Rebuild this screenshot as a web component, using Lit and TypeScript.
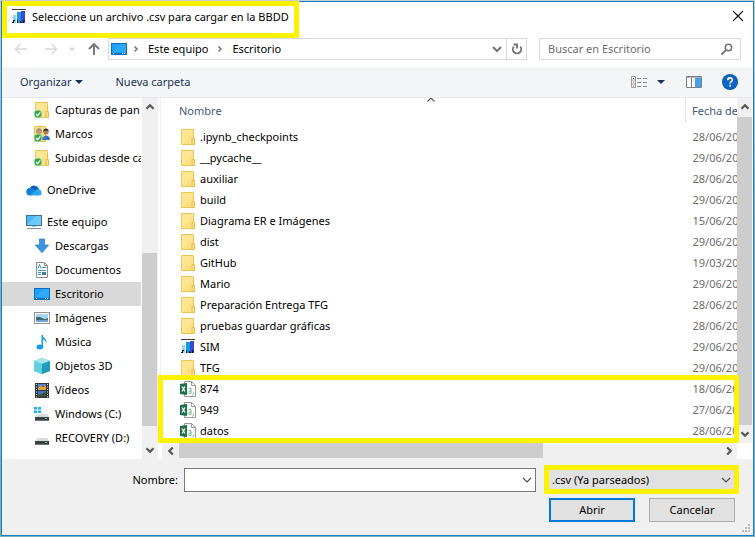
import { LitElement, html, css, svg, TemplateResult } from "lit";
import { customElement, property } from "lit/decorators.js";
import { classMap } from "lit/directives/class-map.js";

const folderShape = svg`
  <path d="M1.500 0.500h12v15h-12z" fill="#ffe596" stroke="#ecc650"/>
  <path d="M2 15L13 3v12z" fill="#ffdd7a" opacity=".6"/>
  <path d="M12 9.500h2.500v6H12z" fill="#ffe28a" stroke="#e6bd42"/>`;

const syncedBadge = svg`
  <circle cx="4" cy="12" r="4" fill="#2fa84a" stroke="#c9ebcf" stroke-width=".6"/>
  <path d="M2 12l1.600 1.700 2.700-3.300" fill="none" stroke="#fff" stroke-width="1.300"/>`;

const driveShape = svg`
  <path d="M3 8h10l2 3H1z" fill="#d9dcdf"/>
  <rect x="1" y="11" width="14" height="4" fill="#3c4146"/>
  <rect x="1" y="14" width="14" height="1" fill="#6d7277"/>
  <rect x="11" y="12" width="2" height="1" fill="#57e06b"/>`;

const shapes: Record<string, TemplateResult> = {
  folder: folderShape,
  syncedFolder: svg`${folderShape}${syncedBadge}`,
  user: svg`
    <path d="M0.500 0.500h11v15h-11z" fill="#ffe08a" stroke="#ecc44f"/>
    <circle cx="5" cy="5.500" r="2.800" fill="#c99a6e"/>
    <path d="M2 6a3 3.300 0 0 1 6-1l-1.500 0-3 .5z" fill="#a3978a"/>
    <path d="M2 11c0-4 6-4 7 0v3h-7z" fill="#8fb1a5"/>
    <circle cx="12" cy="6" r="2.600" fill="#b77b52"/>
    <path d="M9.200 5.500c0-4 5.600-4 5.600 0-1-1.200-3-1.200-5.600 0z" fill="#2c2c30"/>
    <path d="M8.500 14c0-6 7.500-6 7.500 0z" fill="#3b6fb5"/>
    ${syncedBadge}`,
  cloud: svg`
    <path d="M4 6a5 5 0 0 1 9 1l-4 3-6-1z" fill="#0a5fb4"/>
    <path d="M0.500 11a3.700 3.700 0 0 1 4-5c2 0 4 2 7 4l-7 3.500H3A2.700 2.700 0 0 1 .5 11z" fill="#1180d6"/>
    <path d="M10 8a3.300 3.300 0 0 1 5.500 2.500c.5 1.500-.5 3-2 3H3.500z" fill="#2aa5ee"/>`,
  pc: svg`
    <rect x="0.500" y="1.500" width="15" height="10" fill="#4cb8f5" stroke="#3b7395"/>
    <path d="M1 11L10 2h5v9z" fill="#7fd0fb" opacity=".7"/>
    <path d="M6 12h4v1H6z" fill="#b8c4cc"/><path d="M1 14h14v1H1z" fill="#7c93a3"/>`,
  down: svg`<path d="M5.500 1h5v6h4.200L8 14.800 1.300 7h4.200z" fill="#3d96e4" stroke="#2878bd" stroke-width=".7"/>`,
  doc: svg`
    <path d="M2.500 0.500h8l3 3v12h-11z" fill="#fff" stroke="#8b8b8b"/>
    <path d="M10.500 0.500v3h3" fill="none" stroke="#8b8b8b"/>
    <path d="M4 6.500l1.500-4L7 6.500M8 5.500h1M4 8.500h8M4 10.500h3M4 12.500h3M9 5.500h3" fill="none" stroke="#3c8fce"/>
    <rect x="8" y="10" width="4" height="3" fill="#3f7fa8"/>`,
  desktop: svg`
    <rect x="0.500" y="2.500" width="15" height="11" fill="#1da0fb" stroke="#0c6fb8"/>
    <path d="M1 11L9 3h6v8z" fill="#44b4ff" opacity=".45"/>
    <path d="M1 12h14v1H1z" fill="#0d73c2"/>
    <path d="M2 12.500h1M11 12.500h1M13 12.500h1" stroke="#fff"/>`,
  image: svg`
    <rect x="0.500" y="2.500" width="15" height="11" fill="#fff" stroke="#8d9299"/>
    <rect x="2" y="4" width="12" height="8" fill="#a9d5f3"/>
    <path d="M2 7q3-1 6 1t6 0v2H2z" fill="#3b6a75"/><path d="M2 10h12v2H2z" fill="#6fa3cf"/>`,
  music: svg`
    <path d="M8 0.500c0 3 5.500 4 4.500 9-.5-2.500-2-3.500-3.500-4v7.500H8z" fill="#149bf7"/>
    <path d="M7.500 1h1.500v12H7.500z" fill="#149bf7"/>
    <ellipse cx="5.800" cy="13" rx="3.300" ry="2.500" fill="#149bf7"/>`,
  cube: svg`
    <path d="M8 0l8 3v10l-8 3-8-3V3z" fill="#35b5cd"/>
    <path d="M8 0l8 3-8 3-8-3z" fill="#a5e6ee"/>
    <path d="M0 3l8 3v10l-8-3z" fill="#63cfdd"/><path d="M8 6l8-3v10l-8 3z" fill="#1e9cba"/>`,
  film: svg`
    <rect x="1" y="1" width="14" height="15" fill="#35363a"/>
    <path d="M2.500 2v14M13.500 2v14" stroke="#e8e8e8" stroke-dasharray="1 1.500"/>
    <rect x="4" y="2" width="8" height="6" fill="#4f8ad8"/><rect x="4" y="9" width="8" height="6" fill="#3d76cc"/>
    <path d="M4 6l3-2 2 1 3-1v4H4z" fill="#d9a43a"/><path d="M4 13l3-1 5-2v5H4z" fill="#3c4f33"/>
    <rect x="8" y="3" width="2" height="2" fill="#d8503c"/>`,
  windowsDrive: svg`${driveShape}
    <path d="M0 1h3v2.500H0zM4 1h3v2.500H4zM0 4.500h3V7H0zM4 4.500h3V7H4z" fill="#12b1f5"/>`,
  drive: driveShape,
  chart: svg`
    <path d="M1 0h14v1H1z" fill="#3b3b3b"/>
    <path d="M2 6h3v8H2z" fill="#8ed7ea"/><path d="M6 3h4v11H6z" fill="#149be8"/>
    <path d="M10 2h4v12h-4z" fill="#3b48cf"/>
    <path d="M2 11h2v1H3v2H1v-1h1zM6 11h1v3H6zM9 12h1v1h1v1H9zM12 11h2v1h-1v2h-1z" fill="#101a33"/>`,
  csv: svg`
    <path d="M4.500 0.500h7l4 4v11h-11z" fill="#fff" stroke="#9a9a9a"/>
    <path d="M11.500 0.500v4h4" fill="none" stroke="#9a9a9a"/>
    <path d="M8.500 7.500H11v5H9.300q-1.300-1.200 0-2.500h2M13.500 11.500v1.500l-1 1.500" fill="none" stroke="#6fba95"/>
    <path d="M0 3l7-1v12l-7-1z" fill="#1d7044"/>
    <path d="M2 5.500l3 5M5 5.500l-3 5" stroke="#fff" stroke-width="1.300"/>`,
  back: svg`<path d="M14 8H3M7.500 3L2.500 8l5 5" fill="none" stroke="#d9d9d9" stroke-width="1.600"/>`,
  forward: svg`<path d="M2 8h11M8.500 3l5 5-5 5" fill="none" stroke="#d9d9d9" stroke-width="1.600"/>`,
  recent: svg`<path d="M5.500 6.500L8 9l2.500-2.500" fill="none" stroke="#d0d0d0" stroke-width="1.500"/>`,
  up: svg`<path d="M8 14V3M3 8l5-5 5 5" fill="none" stroke="#757575" stroke-width="1.900"/>`,
  crumb: svg`<path d="M6.500 5.500L9 8l-2.500 2.500" fill="none" stroke="#777" stroke-width="1.600"/>`,
  chevron: svg`<path d="M4 6l4 4 4-4" fill="none" stroke="#757575" stroke-width="2"/>`,
  thinChevron: svg`<path d="M4 6l4 4 4-4" fill="none" stroke="#505050" stroke-width="1.200"/>`,
  refresh: svg`<path d="M4.800 5.500a4.200 4.200 0 1 0 6.400 0M4.500 3.500H8v4" fill="none" stroke="#757575" stroke-width="1.900"/>`,
  search: svg`<circle cx="9.500" cy="6.500" r="3.200" fill="none" stroke="#757575" stroke-width="1.500"/><path d="M7.200 8.800L2.500 13.500" stroke="#757575" stroke-width="1.800"/>`,
  close: svg`<path d="M3 3l10 10M13 3L3 13" stroke="#111" stroke-width="1.100"/>`,
  triangle: svg`<path d="M4 6h8l-4 4z" fill="#1b3255"/>`,
  view: svg`
    <path d="M0.500 2.500h4v11h-4zM.5 6h4M.5 10h4" fill="#fff" stroke="#9c9c9c"/>
    <path d="M2 4h1v1H2zM2 7.500h1v1H2zM2 11.500h1v1H2z" fill="#8a4a42"/>
    <path d="M6 4.500h4M12 4.500h4M6 8.500h4M12 8.500h4M6 12.500h4M12 12.500h4" stroke="#8a8a8a"/>`,
  pane: svg`
    <path d="M0.500 2.500h15v11h-15z" fill="#fff" stroke="#7d7f82"/>
    <path d="M1 3h14v1H1z" fill="#a9b2ba"/><path d="M5.500 4v9" stroke="#7d7f82"/>
    <path d="M9 4h6v9H9z" fill="#3f9fe8"/>`,
  help: svg`
    <circle cx="8" cy="8" r="8" fill="#0a58ad"/><circle cx="8" cy="8" r="6.900" fill="#0b66c3"/>
    <path d="M5.800 6.200c0-3 4.500-3 4.500-.3 0 1.700-2.200 1.700-2.200 3.600M8.100 10.800v1.700" fill="none" stroke="#fff" stroke-width="1.700"/>`,
  arrowUp: svg`<path d="M4.500 9.800L8 6.300l3.500 3.500" fill="none" stroke="#555" stroke-width="2.200"/>`,
  arrowDown: svg`<path d="M4.500 6.200L8 9.700l3.500-3.500" fill="none" stroke="#555" stroke-width="2.200"/>`,
  arrowLeft: svg`<path d="M9.800 4.500L6.300 8l3.500 3.500" fill="none" stroke="#555" stroke-width="2.200"/>`,
  arrowRight: svg`<path d="M6.200 4.500L9.700 8l-3.500 3.500" fill="none" stroke="#555" stroke-width="2.200"/>`,
  sort: svg`<path d="M4.500 9.500L8 6l3.500 3.500" fill="none" stroke="#555" stroke-width="1.100"/>`,
  grip: svg`<path d="M11 4h2v2h-2zM8 7h2v2H8zM11 7h2v2h-2zM5 10h2v2H5zM8 10h2v2H8zM11 10h2v2h-2z" fill="#bdbdbd"/>`,
};

const icon = (name: string) =>
  html`<svg class="icon" viewBox="0 0 16 16" width="16" height="16" aria-hidden="true">${shapes[name]}</svg>`;

const iconStyles = css`
  .icon { display: block; flex: none; }
  button {
    margin: 0; padding: 0; border: 0; background: none; color: inherit;
    font: inherit; display: flex; align-items: center; justify-content: center;
  }
`;

interface Place { icon: string; label: string; level?: number; gap?: boolean; selected?: boolean; }

const places: Place[] = [
  { icon: "syncedFolder", label: "Capturas de pan", level: 1 },
  { icon: "user", label: "Marcos", level: 1 },
  { icon: "syncedFolder", label: "Subidas desde ca", level: 1 },
  { icon: "cloud", label: "OneDrive", gap: true },
  { icon: "pc", label: "Este equipo", gap: true },
  { icon: "down", label: "Descargas", level: 1 },
  { icon: "doc", label: "Documentos", level: 1 },
  { icon: "desktop", label: "Escritorio", level: 1, selected: true },
  { icon: "image", label: "Imágenes", level: 1 },
  { icon: "music", label: "Música", level: 1 },
  { icon: "cube", label: "Objetos 3D", level: 1 },
  { icon: "film", label: "Vídeos", level: 1 },
  { icon: "windowsDrive", label: "Windows (C:)", level: 1 },
  { icon: "drive", label: "RECOVERY (D:)", level: 1 },
];

const files: [string, string, string][] = [
  ["folder", ".ipynb_checkpoints", "28/06/20"],
  ["folder", "__pycache__", "29/06/20"],
  ["folder", "auxiliar", "28/06/20"],
  ["folder", "build", "29/06/20"],
  ["folder", "Diagrama ER e Imágenes", "15/06/20"],
  ["folder", "dist", "29/06/20"],
  ["folder", "GitHub", "19/03/20"],
  ["folder", "Mario", "29/06/20"],
  ["folder", "Preparación Entrega TFG", "28/06/20"],
  ["folder", "pruebas guardar gráficas", "28/06/20"],
  ["chart", "SIM", "29/06/20"],
  ["folder", "TFG", "29/06/20"],
  ["csv", "874", "18/06/20"],
  ["csv", "949", "27/06/20"],
  ["csv", "datos", "28/06/20"],
];

@customElement("scroll-rail")
export class ScrollRail extends LitElement {
  @property({ type: Boolean, reflect: true }) horizontal = false;
  @property({ type: Number }) before = 0;
  @property({ type: Number }) thumb = 1;
  @property({ type: Number }) after = 0;

  static styles = [iconStyles, css`
    :host { display: flex; flex-direction: column; background: #f0f0f0; }
    :host([horizontal]) { flex-direction: row; height: 16px; }
    button { width: 15px; height: 18px; }
    :host([horizontal]) button { width: 17px; height: 16px; }
    .thumb { width: 15px; background: #cdcdcd; }
    :host([horizontal]) .thumb { width: auto; height: 15px; }
  `];

  render() {
    const h = this.horizontal;
    return html`
      <button aria-label=${h ? "Izquierda" : "Arriba"}>${icon(h ? "arrowLeft" : "arrowUp")}</button>
      <div style="flex-grow: ${this.before}"></div>
      <div class="thumb" style="flex-grow: ${this.thumb}"></div>
      <div style="flex-grow: ${this.after}"></div>
      <button aria-label=${h ? "Derecha" : "Abajo"}>${icon(h ? "arrowRight" : "arrowDown")}</button>`;
  }
}

@customElement("places-pane")
export class PlacesPane extends LitElement {
  static styles = [iconStyles, css`
    :host { display: flex; flex: none; width: 156px; background: #fff; }
    nav { flex: 1; min-width: 0; overflow: hidden; padding-bottom: 9px; margin-right: 1px; }
    a {
      display: flex; align-items: center; gap: 5px; height: 24px; padding-left: 24px;
      color: #000; text-decoration: none; white-space: nowrap;
    }
    .nested { padding-left: 32px; }
    .gap { margin: 8px 0; }
    .gap + .gap { margin-bottom: 0; }
    .selected { background: #d9d9d9; }
    scroll-rail { width: 16px; }
  `];

  render() {
    return html`
      <nav aria-label="Ubicaciones">
        ${places.map((p) => html`
          <a href="#" class=${classMap({ nested: !!p.level, gap: !!p.gap, selected: !!p.selected })}>
            ${icon(p.icon)}<span>${p.label}</span>
          </a>`)}
      </nav>
      <scroll-rail .before=${137} .thumb=${173} .after=${15}></scroll-rail>`;
  }
}

@customElement("file-list")
export class FileList extends LitElement {
  static styles = [iconStyles, css`
    :host {
      position: relative; display: grid; flex: 1; min-width: 0; background: #fff;
      grid-template: 345px 16px / minmax(0, 1fr) 15px; padding-right: 1px;
    }
    .view { overflow: hidden; margin-left: 2px; border-left: 1px solid #f0f0f0; }
    table { width: 100%; table-layout: fixed; border-collapse: collapse; }
    th { position: relative; height: 25px; padding: 0 0 0 18px; font-weight: 400; text-align: left; color: #43587a; }
    .date { width: 45px; padding-left: 6px; border-left: 1px solid #e5e5e5; white-space: nowrap; }
    thead::after { content: ""; display: block; height: 3px; }
    td { height: 21px; padding: 0; white-space: nowrap; }
    td.when { padding-left: 7px; color: #6d6d6d; }
    .name { display: flex; align-items: center; gap: 4px; padding-left: 19px; color: #000; }
    .sort { position: absolute; top: -6px; left: 50%; }
    .bottom { margin-left: 4px; }
    .marker {
      position: absolute; left: 0; right: 14px; top: 277px; height: 68px;
      box-sizing: border-box; border: 5px solid #fff200; pointer-events: none;
    }
  `];

  render() {
    return html`
      <div class="view">
        <table>
          <thead>
            <tr><th>Nombre<span class="sort">${icon("sort")}</span></th><th class="date">Fecha de</th></tr>
          </thead>
          <tbody>
            ${files.map(([kind, name, date]) => html`
              <tr><td><div class="name">${icon(kind)}<span>${name}</span></div></td><td class="when">${date}</td></tr>`)}
          </tbody>
        </table>
      </div>
      <scroll-rail .before=${1} .thumb=${308} .after=${0}></scroll-rail>
      <scroll-rail class="bottom" horizontal .before=${0} .thumb=${363} .after=${177}></scroll-rail>
      <div class="marker"></div>`;
  }
}

@customElement("app-root")
export class AppRoot extends LitElement {
  static styles = [iconStyles, css`
    :host {
      display: block; padding: 1px; color: #000;
      background: linear-gradient(#c9cdd0, #7fb0b8 40%);
      font: 11px/16px "Noto Sans", "Open Sans", sans-serif;
    }
    .dialog { border: 1px solid #1a80c8; background: #fff; }
    .top { display: flex; justify-content: space-between; align-items: flex-start; margin-top: -1px; }
    h1 {
      display: flex; align-items: center; gap: 5px; height: 37px; box-sizing: border-box; margin: 0;
      padding: 0 5px 5px 4px; border: 5px solid #fff200; font-size: 11px; font-weight: 400; white-space: nowrap;
    }
    .close { margin: 7px 7px 0 0; }
    .nav { display: flex; align-items: center; height: 22px; padding: 0 12px 7px 11px; }
    .back { margin-right: 14px; }
    .recent { margin: 0 6px 0 5px; }
    .address { display: flex; flex: 1; min-width: 0; align-items: center; margin: 0 12px 0 6px; padding-left: 2px; }
    .address, .search { height: 22px; box-sizing: border-box; border: 1px solid #d9d9d9; background: #fff; }
    .address a { color: #000; text-decoration: none; white-space: nowrap; }
    .crumb { margin: 0 4px; }
    .first { margin-left: 1px; }
    .drop { margin-left: auto; padding-right: 1px; }
    .refresh { align-self: stretch; width: 20px; border-left: 1px solid #d9d9d9; }
    .search { display: flex; align-items: center; width: 202px; padding: 0 5px 0 8px; }
    input { flex: 1; min-width: 0; padding: 0; border: 0; outline: 0; background: none; font: inherit; color: #000; }
    input::placeholder { color: #6d6d6d; opacity: 1; }
    .tools {
      display: flex; align-items: center; height: 30px; padding: 0 15px 0 18px;
      background: #f4f5f7; border-bottom: 1px solid #e5e8ec; color: #1b3255;
    }
    .organize { margin-right: 28px; }
    .view { margin-left: auto; gap: 6px; }
    .pane { margin: 0 20px 0 17px; }
    .body { display: flex; }
    .foot { position: relative; padding: 6px 14px 13px; background: #f0f0f0; }
    .line { display: flex; align-items: center; }
    .line > label { flex: none; width: 162px; margin-right: 6px; text-align: right; }
    .combo {
      display: flex; flex: 1; min-width: 0; align-items: center; height: 24px; box-sizing: border-box;
      padding: 0 0 0 4px; border: 1px solid #7a7a7a; background: #fff;
    }
    .filter { position: relative; margin-left: 8px; width: 195px; box-sizing: border-box; border: 5px solid #fff200; }
    .filter svg { position: absolute; right: 0; top: 2px; pointer-events: none; }
    select {
      display: block; width: 100%; height: 19px; padding: 0 0 0 3px; appearance: none;
      border: 0; border-radius: 0; background: #e1e1e1; color: #000; font: inherit;
    }
    .actions { display: flex; justify-content: flex-end; gap: 14px; padding: 4px 4px 0 0; }
    .actions button { width: 86px; height: 24px; box-sizing: border-box; border: 1px solid #adadad; background: #e1e1e1; }
    .actions .primary { border: 2px solid #0078d7; }
    .grip { position: absolute; right: 0; bottom: -1px; }
  `];

  render() {
    return html`
      <main class="dialog">
        <header class="top">
          <h1>${icon("chart")}Seleccione un archivo .csv para cargar en la BBDD</h1>
          <button class="close" aria-label="Cerrar">${icon("close")}</button>
        </header>
        <div class="nav">
          <button class="back" aria-label="Atrás">${icon("back")}</button>
          <button aria-label="Adelante">${icon("forward")}</button>
          <button class="recent" aria-label="Recientes">${icon("recent")}</button>
          <button aria-label="Subir">${icon("up")}</button>
          <div class="address">
            ${icon("desktop")}
            <span class="crumb first">${icon("crumb")}</span><a href="#">Este equipo</a>
            <span class="crumb">${icon("crumb")}</span><a href="#">Escritorio</a>
            <button class="drop" aria-label="Ubicaciones anteriores">${icon("chevron")}</button>
            <button class="refresh" aria-label="Actualizar">${icon("refresh")}</button>
          </div>
          <div class="search">
            <input type="text" aria-label="Buscar" placeholder="Buscar en Escritorio">${icon("search")}
          </div>
        </div>
        <div class="tools">
          <button class="organize">Organizar${icon("triangle")}</button>
          <button>Nueva carpeta</button>
          <button class="view" aria-label="Vista">${icon("view")}${icon("triangle")}</button>
          <button class="pane" aria-label="Panel de vista previa">${icon("pane")}</button>
          <button aria-label="Ayuda">${icon("help")}</button>
        </div>
        <div class="body">
          <places-pane></places-pane>
          <file-list></file-list>
        </div>
        <form class="foot" @submit=${(e: Event) => e.preventDefault()}>
          <div class="line">
            <label for="name">Nombre:</label>
            <div class="combo">
              <input id="name" type="text">
              <button type="button" aria-label="Nombres anteriores">${icon("thinChevron")}</button>
            </div>
            <div class="filter">
              <select aria-label="Tipo de archivo"><option>.csv (Ya parseados)</option></select>
              ${icon("thinChevron")}
            </div>
          </div>
          <div class="actions">
            <button class="primary">Abrir</button>
            <button type="button">Cancelar</button>
          </div>
          <span class="grip">${icon("grip")}</span>
        </form>
      </main>`;
  }
}
